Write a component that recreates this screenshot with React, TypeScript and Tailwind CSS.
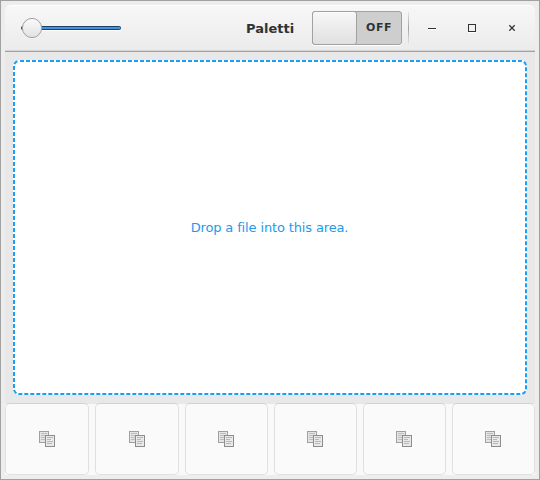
import React from "react";

function Slider() {
  return (
    <svg className="block h-[24px] w-[104px]" viewBox="0 0 104 24">
      <defs>
        <linearGradient id="knob" x1="0" y1="0" x2="0" y2="1">
          <stop offset="0" stopColor="#fafafa" />
          <stop offset="1" stopColor="#e2e2e2" />
        </linearGradient>
      </defs>
      <rect x="2" y="14" width="99" height="1" fill="#fff" />
      <rect x="1.5" y="10.5" width="99" height="3" rx="1" fill="#4a90d9" stroke="#1c4166" />
      <circle cx="12" cy="12" r="9.6" fill="url(#knob)" stroke="#a1a1a1" />
    </svg>
  );
}

function Switch() {
  return (
    <div className="mt-[5px] flex h-[34px] w-[90px] rounded-[3px] border border-[#a1a1a1] bg-[#cecece] shadow-[0_1px_0_#fff]">
      <div className="-my-px -ml-px w-[45px] rounded-[3px] border border-[#a1a1a1] bg-gradient-to-b from-[#f7f7f7] to-[#e0e0e0] shadow-[inset_0_1px_0_#fbfbfb]" />
      <div className="flex-1 pt-[8px] text-center text-[11px] leading-[16px] font-bold tracking-[0.5px] text-[#2e3436]">OFF</div>
    </div>
  );
}

function Header() {
  return (
    <header className="flex h-[47px] rounded-t-[6px] border-t border-b border-t-white border-b-[#a1a1a1] bg-gradient-to-b from-[#f7f7f7] to-[#ebebeb] shadow-[inset_0_-1px_0_#d4d4d4]">
      <div className="ml-[15px] pt-[10px]">
        <Slider />
      </div>
      <div className="ml-[122px] w-[66px] pt-[14px] text-[13px] leading-[18px] font-bold text-[#2e3436]">Paletti</div>
      <Switch />
      <div className="mt-[6px] ml-[6px] h-[32px] w-px bg-gradient-to-b from-[#e4e4e4] via-[#a4a4a4] to-[#e4e4e4]" />
      <svg className="ml-[11px] block h-[44px] w-[110px]" viewBox="0 0 110 44" fill="none">
        <path d="M8 23.5h8" stroke="#fff" />
        <path d="M8 22.5h8" stroke="#2e3436" />
        <path d="M48 26.5h8" stroke="#fff" />
        <rect x="48.5" y="18.5" width="7" height="7" stroke="#2e3436" />
        <path d="M89.3 20.3l5.4 5.4m0-5.4l-5.4 5.4" stroke="#fff" strokeWidth="1.3" />
        <path d="M89.3 19.3l5.4 5.4m0-5.4l-5.4 5.4" stroke="#2e3436" strokeWidth="1.3" />
      </svg>
    </header>
  );
}

function CopyIcon() {
  return (
    <svg className="block h-4 w-4" viewBox="0 0 16 16" fill="none" shapeRendering="crispEdges">
      <rect x="0.5" y="0.5" width="9" height="11" fill="#e5e5e5" stroke="#a0a0a0" />
      <path d="M2 2.5h6M2 4.5h5M2 6.5h6M2 8.5h5" stroke="#bebebe" />
      <rect x="6.5" y="4.5" width="9" height="11" fill="#e9e9e9" stroke="#8d8d8d" />
      <path d="M8 6.5h6M8 8.5h4M8 10.5h6M8 12.5h5" stroke="#b8b8b8" />
    </svg>
  );
}

const wide = "w-[84px] pl-[33px]";
const narrow = "w-[83px] pl-[32px]";
const tiles = [wide, wide, narrow, narrow, narrow, narrow];

export default function App() {
  return (
    <div
      className="flex h-[480px] w-[540px] flex-col border border-[#a1a1a1] bg-[#ededed] p-[4px]"
      style={{ fontFamily: '"DejaVu Sans", sans-serif' }}
    >
      <Header />
      <main className="h-[351px] bg-[#e8e8e8] px-[8px] pt-[8px]">
        <div className="relative flex h-[335px] items-center justify-center rounded-[6px] bg-white pr-px text-[13px] tracking-[-0.14px] text-[#1e9aec]">
          {/* dashed drop-zone outline: 4px dashes, 2px gaps */}
          <svg className="absolute inset-0 h-full w-full" viewBox="0 0 514 335" fill="none">
            <rect x="1" y="1" width="512" height="333" rx="5" stroke="#1a9ff5" strokeWidth="2" strokeDasharray="4 2" strokeDashoffset="-1" />
          </svg>
          Drop a file into this area.
        </div>
      </main>
      <footer className="flex h-[72px] justify-between bg-[#f9f9f9] shadow-[inset_0_1px_0_#e8e8e8]">
        {tiles.map((tile, i) => (
          <div
            key={i}
            className={`flex h-[72px] shrink-0 items-center rounded-[5px] border border-[#e0e0e0] border-t-[#d2d2d2] bg-[#fafafa] ${tile}`}
          >
            <CopyIcon />
          </div>
        ))}
      </footer>
    </div>
  );
}
